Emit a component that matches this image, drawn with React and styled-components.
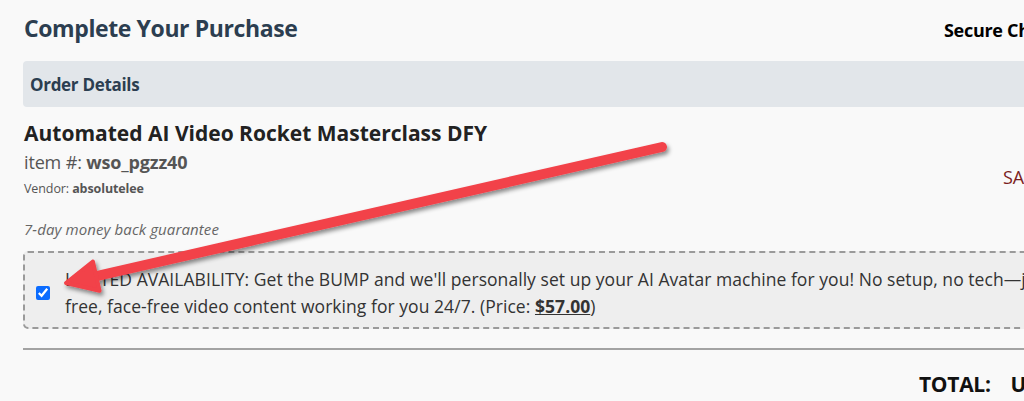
import React from "react";
import styled, { createGlobalStyle } from "styled-components";

const GlobalStyle = createGlobalStyle`
  html, body {
    margin: 0;
    padding: 0;
    background: #f9f9f9;
    overflow: hidden;
  }
  body {
    font-family: "Open Sans", "Noto Sans", sans-serif;
    width: 1024px;
    height: 401px;
  }
`;

const Page = styled.div`
  position: relative;
  width: 1110px;
  padding: 14px 0 0 23px;
  box-sizing: border-box;
`;

const Header = styled.header`
  display: flex;
  justify-content: space-between;
  align-items: baseline;
  padding-left: 1px;
`;

const Title = styled.h2`
  margin: 0;
  font-size: 23px;
  line-height: 29px;
  font-weight: 700;
  color: #2c3e50;
  letter-spacing: -0.4px;
`;

const Secure = styled.div`
  width: 166px;
  font-size: 18px;
  font-weight: 700;
  color: #000;
  white-space: nowrap;
  letter-spacing: -0.3px;
`;

const SectionBar = styled.div`
  margin-top: 18px;
  height: 46px;
  display: flex;
  align-items: center;
  padding: 0 7px;
  background: #e2e6ea;
  border-radius: 4px;
`;

const SectionTitle = styled.h3`
  margin: 0;
  font-size: 17px;
  font-weight: 700;
  color: #2c3e50;
  letter-spacing: -0.3px;
`;

const ProductRow = styled.section`
  display: flex;
  justify-content: space-between;
  padding-left: 1px;
  margin-top: 12px;
`;

const ProductInfo = styled.div`
  display: flex;
  flex-direction: column;
`;

const ProductName = styled.h4`
  margin: 0;
  font-size: 21px;
  line-height: 28px;
  font-weight: 700;
  color: #222;
`;

const ItemNo = styled.div`
  margin-top: 3px;
  font-size: 18px;
  line-height: 25px;
  color: #555;
  letter-spacing: -0.15px;

  b {
    font-weight: 700;
  }
`;

const Vendor = styled.div`
  margin-top: 5px;
  font-size: 12.5px;
  line-height: 18px;
  color: #555;
  letter-spacing: -0.1px;

  b {
    font-weight: 700;
  }
`;

const Guarantee = styled.div`
  margin-top: 21px;
  font-size: 15px;
  line-height: 20px;
  font-style: italic;
  color: #666;
  letter-spacing: 0.1px;
`;

const PriceCol = styled.div`
  width: 107px;
  padding-top: 46px;
  font-size: 18px;
  color: #7b1d1d;
  white-space: nowrap;
`;

const BumpBox = styled.label`
  margin-top: 12px;
  display: flex;
  align-items: center;
  gap: 15px;
  padding: 13px 12px 7px 11px;
  background: #eeeeee;
  border: 2px dashed #9a9a9a;
  border-radius: 5px;
  overflow: hidden;
`;

const Check = styled.input`
  flex: none;
  width: 14px;
  height: 14px;
  margin: 0;
  accent-color: #0b6cff;
`;

const BumpText = styled.div`
  font-size: 17.5px;
  line-height: 27px;
  color: #333;
  letter-spacing: 0.05px;
`;

const Line = styled.span`
  display: block;
  white-space: nowrap;
`;

const Price = styled.strong`
  font-weight: 700;
  text-decoration: underline;
`;

const Divider = styled.hr`
  margin: 19px 0 0 0;
  border: 0;
  border-top: 2px solid #a3a3a3;
`;

const TotalRow = styled.div`
  display: flex;
  justify-content: flex-end;
  margin-top: 20px;
`;

const Total = styled.div`
  width: 191px;
  display: flex;
  gap: 20px;
  font-size: 21px;
  font-weight: 700;
  color: #111;
  white-space: nowrap;
  letter-spacing: -0.3px;
`;

const ArrowLayer = styled.svg`
  position: absolute;
  top: 0;
  left: 0;
  width: 1024px;
  height: 401px;
  pointer-events: none;
  overflow: visible;
`;

function Arrow() {
  // tip and tail of the annotation arrow
  const tip = [66, 283];
  const tail = [662, 147];
  const dx = tail[0] - tip[0];
  const dy = tail[1] - tip[1];
  const len = Math.hypot(dx, dy);
  const ux = dx / len;
  const uy = dy / len;
  const px = -uy;
  const py = ux;
  const headLen = 31;
  const half = 15;
  const bx = tip[0] + ux * headLen;
  const by = tip[1] + uy * headLen;
  const w1 = [bx + px * half, by + py * half];
  const w2 = [bx - px * half, by - py * half];
  const shaftStart = [bx - ux * 2, by - uy * 2];
  return (
    <ArrowLayer viewBox="0 0 1024 401">
      <defs>
        <filter id="arrowShadow" x="-10%" y="-50%" width="120%" height="200%">
          <feDropShadow dx="2" dy="3" stdDeviation="2" floodColor="#000" floodOpacity="0.45" />
        </filter>
      </defs>
      <g filter="url(#arrowShadow)" fill="#f2424a" stroke="#f2424a">
        <line
          x1={shaftStart[0]}
          y1={shaftStart[1]}
          x2={tail[0]}
          y2={tail[1]}
          strokeWidth="10"
          strokeLinecap="round"
        />
        <polygon
          points={`${tip[0]},${tip[1]} ${w1[0]},${w1[1]} ${w2[0]},${w2[1]}`}
          strokeWidth="4"
          strokeLinejoin="round"
        />
      </g>
    </ArrowLayer>
  );
}

export default function App() {
  return (
    <>
      <GlobalStyle />
      <Page>
        <Header>
          <Title>Complete Your Purchase</Title>
          <Secure>Secure Checkout</Secure>
        </Header>

        <SectionBar>
          <SectionTitle>Order Details</SectionTitle>
        </SectionBar>

        <ProductRow>
          <ProductInfo>
            <ProductName>Automated AI Video Rocket Masterclass DFY</ProductName>
            <ItemNo>
              item #: <b>wso_pgzz40</b>
            </ItemNo>
            <Vendor>
              Vendor: <b>absolutelee</b>
            </Vendor>
            <Guarantee>7-day money back guarantee</Guarantee>
          </ProductInfo>
          <PriceCol>SALE</PriceCol>
        </ProductRow>

        <BumpBox>
          <Check type="checkbox" defaultChecked />
          <BumpText>
            <Line>
              LIMITED AVAILABILITY: Get the BUMP and we'll personally set up your AI Avatar machine for you! No setup, no tech—just hands-
            </Line>
            <Line>
              free, face-free video content working for you 24/7. (Price: <Price>$57.00</Price>)
            </Line>
          </BumpText>
        </BumpBox>

        <Divider />

        <TotalRow>
          <Total>
            <span>TOTAL:</span>
            <span>USD $57.00</span>
          </Total>
        </TotalRow>

        <Arrow />
      </Page>
    </>
  );
}
